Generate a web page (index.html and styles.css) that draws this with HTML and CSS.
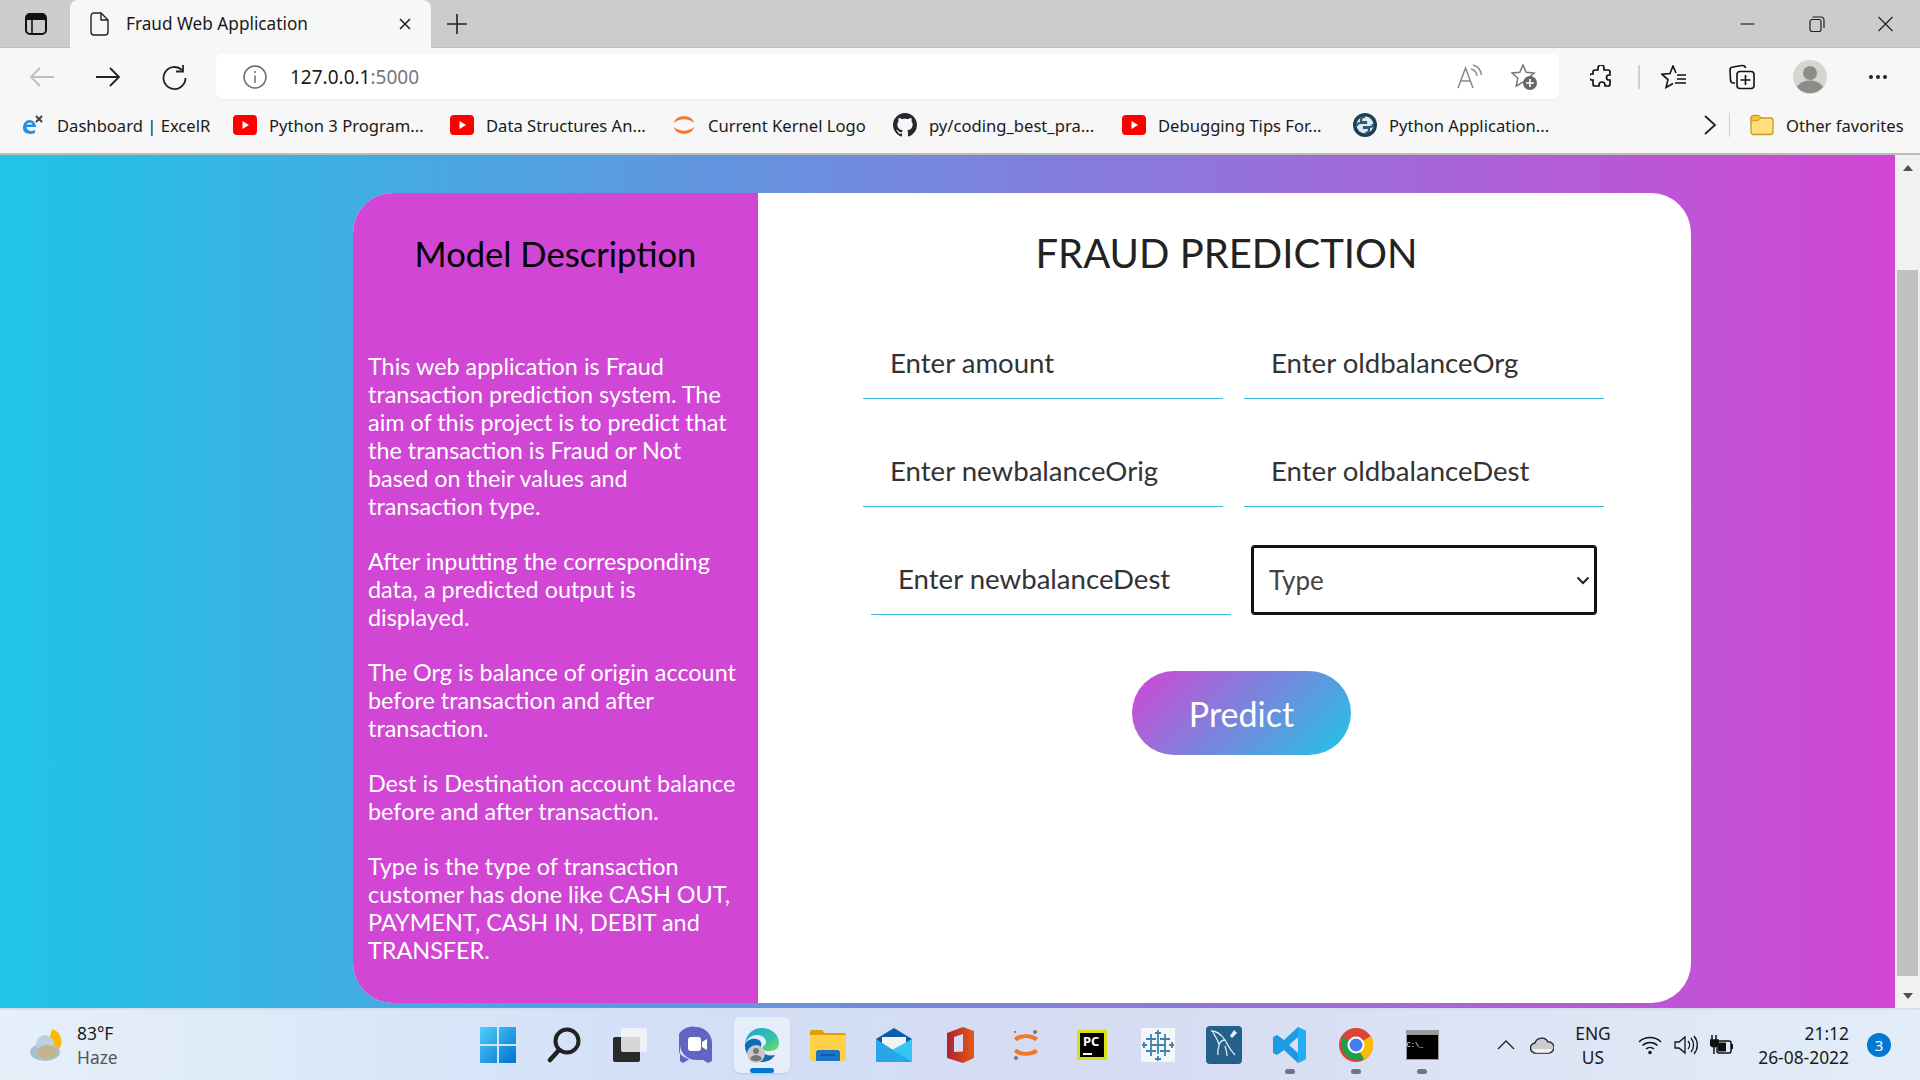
FILE: index.html
```html
<!DOCTYPE html>
<html lang="en">
    <head>
        <meta charset="UTF-8" />
        <title>Fraud Web Application</title>
        <link rel="stylesheet" href="styles.css">
    </head>
    <body>
        <!-- tab strip -->
        <header class="tabstrip">
            <span class="tabs-btn">
                <svg width="22" height="22" viewBox="0 0 22 22"><rect x="1" y="1" width="20" height="20" rx="4" fill="none" stroke="#111" stroke-width="2"/><path d="M1 6V5a4 4 0 0 1 4-4h12a4 4 0 0 1 4 4v2H1z" fill="#111"/><path d="M7 7v14" stroke="#111" stroke-width="1.6"/></svg>
            </span>
            <div class="tab">
                <svg width="20" height="24" viewBox="0 0 20 24"><path d="M4 1h7l7 7v12a3 3 0 0 1-3 3H4a3 3 0 0 1-3-3V4a3 3 0 0 1 3-3zM11 1v7h7" fill="none" stroke="#222" stroke-width="1.4"/></svg>
                <span class="tab-title">Fraud Web Application</span>
                <svg class="tab-close" width="14" height="14" viewBox="0 0 14 14"><path d="M2 2l10 10M12 2L2 12" stroke="#222" stroke-width="1.6"/></svg>
            </div>
            <svg class="new-tab" width="22" height="22" viewBox="0 0 22 22"><path d="M11 1v20M1 11h20" stroke="#222" stroke-width="1.6"/></svg>
            <div class="win-controls">
                <svg width="69" height="16" viewBox="0 0 16 16"><path d="M1 8h14" stroke="#222" stroke-width="1.200"/></svg>
                <svg width="69" height="16" viewBox="0 0 16 16"><path d="M1.500 5.500a2 2 0 0 1 2-2h7a2 2 0 0 1 2 2v8a2 2 0 0 1-2 2h-7a2 2 0 0 1-2-2zM4 1h8.500a3 3 0 0 1 3 3v8" fill="none" stroke="#222" stroke-width="1.200"/></svg>
                <svg width="69" height="16" viewBox="0 0 16 16"><path d="M1 1l14 14M15 1L1 15" stroke="#222" stroke-width="1.200"/></svg>
            </div>
        </header>

        <!-- toolbar -->
        <nav class="toolbar">
            <span class="tool"><svg width="26" height="22" viewBox="0 0 26 22"><path d="M25 11H2M11 2l-9 9 9 9" fill="none" stroke="#bdbdbd" stroke-width="1.8"/></svg></span>
            <span class="tool"><svg width="26" height="22" viewBox="0 0 26 22"><path d="M1 11h23M15 2l9 9-9 9" fill="none" stroke="#222" stroke-width="1.8"/></svg></span>
            <span class="tool"><svg width="26" height="26" viewBox="0 0 26 26"><path d="M21 6a11 11 0 1 0 3.500 8" fill="none" stroke="#222" stroke-width="1.8"/><path d="M22 1v6.500h-7" fill="none" stroke="#222" stroke-width="1.8"/></svg></span>
            <div class="addressbar">
                <svg class="info" width="24" height="24" viewBox="0 0 24 24"><circle cx="12" cy="12" r="11" fill="none" stroke="#666" stroke-width="1.400"/><path d="M12 10.500V18" stroke="#666" stroke-width="1.400"/><circle cx="12" cy="7" r="1" fill="#666"/></svg>
                <span class="url">127.0.0.1<span class="port">:5000</span></span>
                <svg class="read-aloud" width="26" height="26" viewBox="0 0 26 26"><path d="M1 24L8.500 4 16 24M4 17h9" fill="none" stroke="#888" stroke-width="1.500"/><path d="M14 5a8 8 0 0 1 6 7M16 1a12 12 0 0 1 8.500 10" fill="none" stroke="#888" stroke-width="1.500"/></svg>
                <svg class="fav-add" width="28" height="26" viewBox="0 0 28 26"><path d="M12 1l3.200 7.200 7.800.8-5.800 5.200 1.600 7.700L12 18l-6.800 3.900 1.600-7.700L1 9l7.800-.8z" fill="none" stroke="#777" stroke-width="1.500"/><circle cx="19" cy="19" r="7" fill="#666"/><path d="M19 15v8M15 19h8" stroke="#fff" stroke-width="1.600"/></svg>
            </div>
            <div class="tool-right">
                <span class="tool-sm"><svg width="22" height="24" viewBox="0 0 22 24"><path d="M8 3a3 3 0 0 1 6 0v2h4a2 2 0 0 1 2 2v3h-1a2.500 2.500 0 0 0 0 5h1v4a2 2 0 0 1-2 2h-3v-1a3 3 0 0 0-6 0v1H5a2 2 0 0 1-2-2v-4H2a3 3 0 0 1 0-6h1V7a2 2 0 0 1 2-2h3z" fill="none" stroke="#111" stroke-width="1.700"/></svg></span>
                <span class="tool-sep"></span>
                <span class="tool-sm"><svg width="26" height="24" viewBox="0 0 26 24"><path d="M15 8l-3-7-3 7.500L1 9.300l6 5.300L5 22.500l7-4" fill="none" stroke="#111" stroke-width="1.600"/><path d="M16 10h9M16 14h9M14 18h11" stroke="#111" stroke-width="1.600"/></svg></span>
                <span class="tool-sm"><svg width="26" height="26" viewBox="0 0 26 26"><path d="M6 19l-1.500 0A3 3 0 0 1 1.500 16L1 6a3 3 0 0 1 3-3l9-1.500a3 3 0 0 1 3.500 2.500" fill="none" stroke="#111" stroke-width="1.600"/><rect x="8" y="7.500" width="17" height="17" rx="3" fill="none" stroke="#111" stroke-width="1.600"/><path d="M16.500 11v10M11.500 16h10" stroke="#111" stroke-width="1.600"/></svg></span>
                <span class="tool-sm"><svg width="34" height="34" viewBox="0 0 34 34"><circle cx="17" cy="17" r="17" fill="#d6d5d1"/><circle cx="17" cy="13" r="7" fill="#8e8c88"/><path d="M4 27c3-5 8-6.500 13-6.500S27 22 30 27a17 17 0 0 1-26 0z" fill="#8e8c88"/></svg></span>
                <span class="tool-sm"><svg width="20" height="6" viewBox="0 0 20 6"><circle cx="3" cy="3" r="2" fill="#222"/><circle cx="10" cy="3" r="2" fill="#222"/><circle cx="17" cy="3" r="2" fill="#222"/></svg></span>
            </div>
        </nav>

        <!-- bookmarks -->
        <nav class="bookmarks">
            <a class="bm"><svg width="24" height="22" viewBox="0 0 24 22"><path d="M2 14c0-5 3-8 6.500-8S15 9 15 13H5.500c.5 4 5 5 8.500 3v3c-5 2-12 1-12-5zM5.500 10.500h6C11 8 6.500 8 5.500 10.500z" fill="#2a8fdc"/><path d="M15 2l6 6M21 2l-6 6" stroke="#444" stroke-width="2"/></svg><span>Dashboard | ExcelR</span></a>
            <a class="bm"><svg class="yt" width="24" height="20" viewBox="0 0 24 20"><rect width="24" height="20" rx="4" fill="#f00"/><path d="M9.500 6l6.500 4-6.500 4z" fill="#fff"/></svg><span>Python 3 Program...</span></a>
            <a class="bm"><svg class="yt" width="24" height="20" viewBox="0 0 24 20"><rect width="24" height="20" rx="4" fill="#f00"/><path d="M9.500 6l6.500 4-6.500 4z" fill="#fff"/></svg><span>Data Structures An...</span></a>
            <a class="bm"><svg width="24" height="24" viewBox="0 0 24 24"><path d="M2 10C3 1 21 1 22 10 17 5 7 5 2 10zM2 14C3 23 21 23 22 14 17 19 7 19 2 14z" fill="#f37726"/></svg><span>Current Kernel Logo</span></a>
            <a class="bm"><svg width="24" height="24" viewBox="0 0 16 16"><path fill="#24292f" d="M8 0C3.580 0 0 3.580 0 8c0 3.540 2.290 6.530 5.470 7.590.4.070.55-.17.55-.38 0-.19-.01-.82-.01-1.490-2.010.37-2.530-.49-2.690-.94-.09-.23-.48-.94-.82-1.130-.28-.15-.68-.52-.01-.53.63-.01 1.080.58 1.230.82.720 1.210 1.870.870 2.330.660.070-.520.280-.870.510-1.070-1.780-.2-3.640-.890-3.640-3.950 0-.870.310-1.590.820-2.150-.080-.2-.360-1.020.080-2.120 0 0 .670-.210 2.200.820.640-.180 1.320-.270 2-.270s1.360.090 2 .270c1.530-1.040 2.200-.820 2.200-.820.440 1.100.160 1.920.080 2.120.510.560.820 1.270.820 2.150 0 3.070-1.870 3.750-3.650 3.950.290.250.540.730.540 1.480 0 1.070-.010 1.930-.010 2.200 0 .210.150.460.550.380A8.010 8.010 0 0 0 16 8c0-4.420-3.580-8-8-8z"/></svg><span>py/coding_best_pra...</span></a>
            <a class="bm"><svg class="yt" width="24" height="20" viewBox="0 0 24 20"><rect width="24" height="20" rx="4" fill="#f00"/><path d="M9.500 6l6.500 4-6.500 4z" fill="#fff"/></svg><span>Debugging Tips For...</span></a>
            <a class="bm"><svg width="24" height="24" viewBox="0 0 24 24"><circle cx="12" cy="12" r="12" fill="#1f3f56"/><circle cx="12" cy="12" r="8.500" fill="#dfe8ee"/><path d="M12 4c-3 0-4 1.500-4 3v2h5v1H7c-2 0-3 1-3 3M12 20c3 0 4-1.500 4-3v-2h-5v-1h6c2 0 3-1 3-3" fill="none" stroke="#2b5a7a" stroke-width="2.200"/></svg><span>Python Application...</span></a>
            <svg class="bm-more" width="14" height="20" viewBox="0 0 14 20"><path d="M2 1l10 9-10 9" fill="none" stroke="#222" stroke-width="1.800"/></svg>
            <span class="bm-sep"></span>
            <a class="bm-other"><svg width="24" height="22" viewBox="0 0 24 22"><path d="M1 4a2.500 2.500 0 0 1 2.500-2.500h5L11 4h9.500A2.500 2.500 0 0 1 23 6.500V18a2.500 2.500 0 0 1-2.500 2.500h-17A2.500 2.500 0 0 1 1 18z" fill="#ffdf7e" stroke="#c99a1e" stroke-width="1.300"/><path d="M1 7V4a2.500 2.500 0 0 1 2.500-2.500h5L11 4 8 6.500z" fill="#f5c132" stroke="#c99a1e" stroke-width="1"/></svg><span>Other favorites</span></a>
        </nav>

        <!-- the page itself -->
        <div class="viewport">
            <main class="page">
                <section class="card">
                    <aside class="desc">
                        <h2>Model Description</h2>
                        <p>This web application is Fraud transaction prediction system. The aim of this project is to predict that the transaction is Fraud or Not based on their values and transaction type.</p>
                        <p>After inputting the corresponding data, a predicted output is displayed.</p>
                        <p>The Org is balance of origin account before transaction and after transaction.</p>
                        <p>Dest is Destination account balance before and after transaction.</p>
                        <p>Type is the type of transaction customer has done like CASH OUT, PAYMENT, CASH IN, DEBIT and TRANSFER.</p>
                    </aside>
                    <form class="predict">
                        <h1>FRAUD PREDICTION</h1>
                        <div class="row">
                            <input type="text" placeholder="Enter amount" />
                            <input type="text" placeholder="Enter oldbalanceOrg" />
                        </div>
                        <div class="row">
                            <input type="text" placeholder="Enter newbalanceOrig" />
                            <input type="text" placeholder="Enter oldbalanceDest" />
                        </div>
                        <div class="row row-last">
                            <input type="text" placeholder="Enter newbalanceDest" />
                            <div class="select-wrap">
                                <select>
                                    <option>Type</option>
                                    <option>CASH OUT</option>
                                    <option>PAYMENT</option>
                                    <option>CASH IN</option>
                                    <option>DEBIT</option>
                                    <option>TRANSFER</option>
                                </select>
                                <svg class="select-arrow" width="14" height="9" viewBox="0 0 14 9"><path d="M1.500 1.500L7 7l5.500-5.500" fill="none" stroke="#222" stroke-width="2"/></svg>
                            </div>
                        </div>
                        <button type="button" class="predict-btn">Predict</button>
                    </form>
                </section>
            </main>
            <div class="scrollbar">
                <span class="arrow arrow-up"></span>
                <div class="thumb"></div>
                <span class="arrow arrow-down"></span>
            </div>
        </div>

        <!-- windows taskbar -->
        <footer class="taskbar">
            <div class="weather">
                <svg width="36" height="34" viewBox="0 0 36 34"><path d="M22 1a13 13 0 0 1 4 23l-8-8z" fill="#ffb900"/><ellipse cx="15" cy="24" rx="15" ry="9" fill="#a9c0d3"/><circle cx="15" cy="16" r="9" fill="#bcd0df"/><ellipse cx="17" cy="24" rx="10" ry="7" fill="#c2b58c"/></svg>
                <div class="weather-text"><span>83°F</span><span class="haze">Haze</span></div>
            </div>
            <div class="apps">
                <span class="app"><svg width="36" height="36" viewBox="0 0 36 36"><defs><linearGradient id="win" x1="0" y1="0" x2="1" y2="1"><stop offset="0" stop-color="#50d0fb"/><stop offset="1" stop-color="#0071ce"/></linearGradient></defs><path fill="url(#win)" d="M1 0h16v17H0V1a1 1 0 0 1 1-1zM19 0h16a1 1 0 0 1 1 1v16H19zM0 19h17v17H1a1 1 0 0 1-1-1zM19 19h17v16a1 1 0 0 1-1 1H19z"/></svg></span>
                <span class="app"><svg width="34" height="36" viewBox="0 0 34 36"><circle cx="20" cy="14" r="11.500" fill="none" stroke="#222" stroke-width="4"/><path d="M12 23L3 33" stroke="#222" stroke-width="4.500" stroke-linecap="round"/></svg></span>
                <span class="app"><svg width="36" height="36" viewBox="0 0 36 36"><rect x="1" y="10" width="27" height="25" rx="2" fill="#2a2a2a"/><rect x="9" y="1" width="26" height="24" rx="2" fill="#f4f4f4" fill-opacity=".85"/></svg></span>
                <span class="app"><svg width="34" height="38" viewBox="0 0 34 38"><path d="M17 1a16 16 0 0 1 16 16v18l-4 2-5-3H17A16 16 0 0 1 1 18v17l3 2 5-3 1-1A16 16 0 0 1 17 1z" fill="#6264c4"/><rect x="9" y="11" width="13" height="14" rx="3" fill="#fff"/><path d="M23 16l5-3v11l-5-3z" fill="#fff"/></svg></span>
                <span class="app app-active"><svg width="36" height="36" viewBox="0 0 36 36"><defs><linearGradient id="edge" x1="0" y1="0" x2="1" y2="1"><stop offset="0" stop-color="#1ea7d8"/><stop offset=".6" stop-color="#35c1a9"/><stop offset="1" stop-color="#7edc5d"/></linearGradient></defs><path d="M1 17C2 7 9 1 18 1c10 0 17 7 17 15 0 6-5 8-10 8-3 0-7-1-6-4 1-2 3-2 3-5 0-4-4-7-9-7C7 8 3 12 1 17z" fill="url(#edge)"/><path d="M1 17c2-4 7-6 11-5 5 1 6 4 5 8-1 5 5 10 14 8-3 5-8 7-13 7C8 35 0 27 1 17z" fill="#0f6cb5"/><circle cx="12" cy="27" r="9" fill="#c9c9c9"/><circle cx="12" cy="24" r="3" fill="#777"/><path d="M6 32c1-3 4-4 6-4s5 1 6 4a9 9 0 0 1-12 0z" fill="#777"/></svg><i class="indicator"></i></span>
                <span class="app"><svg width="36" height="32" viewBox="0 0 36 32"><path d="M0 3a2 2 0 0 1 2-2h10l3 3h19a2 2 0 0 1 2 2v3H0z" fill="#dda000"/><path d="M0 6h36v24a2 2 0 0 1-2 2H2a2 2 0 0 1-2-2z" fill="#ffcf48"/><path d="M6 32v-8a3 3 0 0 1 3-3h18a3 3 0 0 1 3 3v8z" fill="#1a74c9"/><path d="M11 26h14" stroke="#0d4f94" stroke-width="1.500"/></svg></span>
                <span class="app"><svg width="36" height="34" viewBox="0 0 36 34"><path d="M0 11L18 0l18 11v21a2 2 0 0 1-2 2H2a2 2 0 0 1-2-2z" fill="#0a5ba8"/><path d="M6 9h24v12L18 25 6 21z" fill="#f2f2f2"/><path d="M0 11l36 23H2a2 2 0 0 1-2-2z" fill="#27a7e8"/><path d="M36 11v23L16 22z" fill="#36c4f4"/></svg></span>
                <span class="app"><svg width="28" height="36" viewBox="0 0 28 36"><defs><linearGradient id="off" x1="0" y1="0" x2="1" y2="0"><stop offset="0" stop-color="#b02033"/><stop offset="1" stop-color="#e35a10"/></linearGradient></defs><path d="M17 0l11 4v27l-11 5-16-5V6zM17 7L8 10v15l9-.5z" fill="url(#off)" fill-rule="evenodd"/></svg></span>
                <span class="app"><svg width="28" height="32" viewBox="0 0 28 32"><path d="M2 9c5-5 19-5 24 0-2 2.500-3 3-3 3C18 8 10 8 5 12 4 12 3 11 2 9zM2 23c5 5 19 5 24 0-2-2.500-3-3-3-3-5 4-13 4-18 0-1 0-2 1-3 3z" fill="#f37726"/><circle cx="23" cy="3" r="2" fill="#777"/><circle cx="3" cy="3" r="1" fill="#666"/><circle cx="4" cy="29" r="2" fill="#777"/></svg></span>
                <span class="app"><span class="pycharm">PC<i></i></span></span>
                <span class="app"><svg width="34" height="34" viewBox="0 0 34 34"><rect width="34" height="34" rx="1" fill="#f4f6f8"/><path d="M17 8v18M9 17h16M10 6v10M5 11h10M24 6v10M19 11h10M10 18v10M5 23h10M24 18v10M19 23h10M17 2v6M14 5h6M17 28v5M14 31h6M3 14v6M1 17h5M31 14v6M28 17h5" stroke="#3f83ad" stroke-width="1.800"/></svg></span>
                <span class="app"><svg width="36" height="38" viewBox="0 0 36 38"><rect width="36" height="38" rx="4" fill="#24618a"/><path d="M5 5c6 0 10 3 14 9 3 5 4 9 10 15M7 6c2 5 5 7 6 13 0 3-2 4-1 10M19 14c-3 0-5 2-6 5M19 20c1 4 2 6 2 10" fill="none" stroke="#dce9f0" stroke-width="1.300"/><path d="M28 4l3 3-5 5-2-2z" fill="#eef"/></svg></span>
                <span class="app dot"><svg width="34" height="36" viewBox="0 0 34 36"><path d="M25 0l8 4v28l-8 4-14-13-7 5-4-2V10l4-2 7 5zM25 10l-9 8 9 8z" fill="#1e9ae0" fill-rule="evenodd"/><path d="M25 0l8 4v28l-8 4z" fill="#22adf6"/></svg><i></i></span>
                <span class="app dot"><svg width="34" height="36" viewBox="0 0 34 34"><circle cx="17" cy="17" r="17" fill="#db4437"/><path d="M17 17L32 8a17 17 0 0 1-8 24z" fill="#fbbc05"/><path d="M17 17l8 14a17 17 0 0 1-23-14L2 8z" fill="#1e9e48"/><circle cx="17" cy="17" r="8.500" fill="#fff"/><circle cx="17" cy="17" r="6.500" fill="#3f7ff0"/></svg><i></i></span>
                <span class="app dot"><span class="cmd"><b>C:\_</b></span><i></i></span>
            </div>
            <div class="tray">
                <span class="tray-icon"><svg width="18" height="10" viewBox="0 0 18 10"><path d="M1 9l8-8 8 8" fill="none" stroke="#222" stroke-width="1.300"/></svg></span>
                <span class="tray-icon"><svg width="24" height="18" viewBox="0 0 24 18"><path d="M6 17a5 5 0 0 1-1-10 7 7 0 0 1 13-1 5.500 5.500 0 0 1 1 11z" fill="#ccc" stroke="#222" stroke-width="1.300"/><path d="M2 13h20v1l-3 3H6z" fill="#fff" opacity=".7"/></svg></span>
                <div class="lang"><span>ENG</span><span>US</span></div>
                <span class="tray-icon tray-first"><svg width="24" height="20" viewBox="0 0 24 20"><path d="M1 7a16 16 0 0 1 22 0M4.500 10.500a11 11 0 0 1 15 0M8 14a6 6 0 0 1 8 0" fill="none" stroke="#111" stroke-width="1.500"/><circle cx="12" cy="17.500" r="1.800" fill="#111"/></svg></span>
                <span class="tray-icon"><svg width="24" height="22" viewBox="0 0 24 22"><path d="M1 8v6h4l6 5V3L5 8z" fill="none" stroke="#111" stroke-width="1.300"/><path d="M14 7a6 6 0 0 1 0 8M17 4a11 11 0 0 1 0 14M20 2a14 14 0 0 1 0 18" fill="none" stroke="#111" stroke-width="1.300"/></svg></span>
                <span class="tray-icon"><svg width="24" height="22" viewBox="0 0 24 22"><path d="M2 1v5M6 1v5M0 6h8v3a4 4 0 0 1-8 0zM4 13v7" stroke="#111" stroke-width="1.500" fill="#111"/><rect x="7" y="7" width="14" height="12" rx="2" fill="none" stroke="#111" stroke-width="1.500"/><rect x="8" y="8.500" width="8" height="9" fill="#111"/><path d="M22 10v5" stroke="#111" stroke-width="2"/></svg></span>
                <div class="clock"><span>21:12</span><span>26-08-2022</span></div>
                <span class="notif">3</span>
            </div>
        </footer>
    </body>
</html>
```

FILE: styles.css
```css
* {
    padding: 0;
    margin: 0;
    box-sizing: border-box;
}
html,
body {
    height: 100%;
}
body {
    display: flex;
    flex-direction: column;
    height: 100vh;
    overflow: hidden;
    font-family: "Noto Sans", "Liberation Sans", sans-serif;
    color: #1a1a1a;
}

/* tab strip */
.tabstrip {
    height: 48px;
    display: flex;
    align-items: center;
    background-color: #cccccc;
    border-bottom: 1px solid #bdbdbd;
}
.tabs-btn {
    width: 70px;
    padding-left: 2px;
    display: flex;
    justify-content: center;
}
.tab {
    width: 361px;
    height: 48px;
    padding: 0 19px 0 20px;
    display: flex;
    align-items: center;
    background-color: #f7f7f7;
    border-radius: 8px 8px 0 0;
}
.tab-title {
    margin-left: 16px;
    font-size: 17.2px;
    flex: 1;
}
.new-tab {
    margin-left: 15px;
}
.win-controls {
    margin-left: auto;
    display: flex;
}

/* toolbar */
.toolbar {
    height: 53px;
    padding: 6px 0 2px 9px;
    display: flex;
    align-items: center;
    background-color: #f7f7f7;
}
.tool {
    width: 66px;
    display: flex;
    justify-content: center;
}
.addressbar {
    flex: 1;
    height: 45px;
    margin-left: 9px;
    padding: 0 20px 0 27px;
    display: flex;
    align-items: center;
    background-color: #fff;
    border-radius: 6px;
    box-shadow: 0 1px 2px rgba(0, 0, 0, 0.05);
}
.url {
    margin-left: 23px;
    font-size: 19px;
    flex: 1;
}
.port {
    color: #777;
}
.fav-add {
    margin-left: 28px;
}
.tool-right {
    width: 361px;
    padding-left: 8px;
    display: flex;
    align-items: center;
}
.tool-sm {
    width: 68px;
    display: flex;
    justify-content: center;
}
.tool-sep {
    width: 2px;
    height: 24px;
    margin-left: 3px;
    background-color: #d0d0d0;
}

/* bookmarks */
.bookmarks {
    height: 54px;
    padding: 0 0 4px 21px;
    display: grid;
    grid-template-columns: 212px 217px 222px 221px 229px 231px 337px 39px 21px auto;
    align-items: center;
    background-color: #f7f7f7;
    border-bottom: 2px solid #bcbcbc;
}
.bm,
.bm-other {
    display: flex;
    align-items: center;
    font-size: 16.6px;
    white-space: nowrap;
}
.bm span,
.bm-other span {
    margin-left: 12px;
}
.bm-more {
    justify-self: center;
}
.bm-sep {
    width: 1px;
    height: 24px;
    background-color: #d0d0d0;
}

/* page */
.viewport {
    flex: 1;
    display: flex;
    min-height: 0;
}
.page {
    flex: 1;
    padding: 38px 0 0 353px;
    background: linear-gradient(90deg, #1fc5e6, #d246d4);
}
.card {
    width: 1338px;
    height: 810px;
    display: flex;
    overflow: hidden;
    background-color: #fff;
    border-radius: 40px;
    font-family: Lato, "Open Sans", sans-serif;
}
.desc {
    width: 405px;
    padding: 39px 15px 0;
    background-color: #d146d4;
    color: #fff;
}
.desc h2 {
    margin-bottom: 76px;
    font-size: 34.6px;
    line-height: 44px;
    font-weight: 400;
    color: #000;
    text-align: center;
}
.desc p {
    margin-bottom: 27px;
    font-size: 23.4px;
    line-height: 28px;
}
.predict {
    flex: 1;
    padding: 32px 87px 0 105px;
}
.predict h1 {
    margin-bottom: 10px;
    padding-right: 14px;
    font-size: 40px;
    line-height: 56px;
    font-weight: 400;
    color: #222;
    text-align: center;
}
.row {
    display: flex;
    gap: 21px;
    height: 108px;
    align-items: flex-end;
}
.row input {
    width: 360px;
    height: 72px;
    padding-left: 27px;
    border: none;
    border-bottom: 1px solid #3db5d8;
    outline: none;
    font-family: inherit;
    font-size: 27.6px;
    color: #333;
}
.row input::placeholder {
    color: #333;
    opacity: 1;
}
.row-last {
    margin-left: 8px;
    gap: 20px;
}
.select-wrap {
    position: relative;
    width: 346px;
    height: 70px;
}
.select-wrap select {
    width: 100%;
    height: 100%;
    padding-left: 15px;
    border: 3px solid #111;
    border-radius: 4px;
    background-color: #fff;
    appearance: none;
    font-family: inherit;
    font-size: 26px;
    color: #444;
}
.select-arrow {
    position: absolute;
    right: 7px;
    top: 31px;
    pointer-events: none;
}
.predict-btn {
    display: block;
    width: 219px;
    height: 84px;
    margin: 56px 0 0 269px;
    border: none;
    border-radius: 42px;
    background: linear-gradient(135deg, #d246d4, #1fc5e6);
    font-family: inherit;
    font-size: 34px;
    color: #fff;
}

/* scrollbar */
.scrollbar {
    width: 25px;
    display: flex;
    flex-direction: column;
    align-items: center;
    background-color: #f1f1f1;
}
.arrow {
    flex: none;
    width: 0;
    height: 0;
    border-left: 5.5px solid transparent;
    border-right: 5.5px solid transparent;
}
.arrow-up {
    margin-top: 10px;
    border-bottom: 6px solid #505050;
}
.arrow-down {
    margin-top: 17px;
    border-top: 6px solid #505050;
}
.thumb {
    flex: none;
    width: 21px;
    height: 706px;
    margin-top: 99px;
    background-color: #c1c1c1;
}

/* taskbar */
.taskbar {
    height: 72px;
    display: flex;
    align-items: center;
    background: linear-gradient(90deg, #e6f0f9, #d2dff7 35%, #d6dcf2 60%, #e3edf8);
    border-top: 2px solid #d5dfec;
}
.weather {
    width: 465px;
    padding-left: 30px;
    display: flex;
    align-items: center;
    gap: 11px;
}
.weather-text,
.lang,
.clock {
    display: flex;
    flex-direction: column;
    font-size: 17.4px;
    line-height: 24px;
}
.haze {
    color: #555;
}
.apps {
    display: flex;
}
.app {
    position: relative;
    width: 66px;
    height: 70px;
    display: flex;
    align-items: center;
    justify-content: center;
}
.app-active::before {
    content: "";
    position: absolute;
    left: 5px;
    right: 5px;
    top: 7px;
    bottom: 7px;
    background-color: rgba(255, 255, 255, 0.45);
    border-radius: 6px;
    box-shadow: 0 1px 2px rgba(0, 0, 0, 0.12);
}
.app svg {
    position: relative;
}
.indicator {
    position: absolute;
    left: 21px;
    bottom: 7px;
    width: 24px;
    height: 5px;
    background-color: #0078d4;
    border-radius: 3px;
}
.dot i {
    position: absolute;
    left: 28px;
    bottom: 6px;
    width: 10px;
    height: 5px;
    background-color: #6f7680;
    border-radius: 3px;
}
.pycharm {
    position: relative;
    width: 30px;
    height: 30px;
    padding: 1px 3px;
    background-color: #000;
    border: 3px solid #d4e116;
    font-size: 13px;
    line-height: 15px;
    font-weight: 700;
    color: #fff;
}
.pycharm i {
    position: absolute;
    left: 3px;
    bottom: 2px;
    width: 9px;
    height: 2px;
    background-color: #fff;
}
.cmd {
    width: 33px;
    height: 30px;
    padding-top: 6px;
    background-color: #000;
    border: 1px solid #9a9a9a;
    border-top: 5px solid #9a9a9a;
    font-size: 7px;
    line-height: 8px;
    color: #fff;
}
.cmd b {
    font-weight: 400;
    font-family: "Liberation Mono", monospace;
}
.tray {
    margin-left: auto;
    padding-right: 29px;
    display: flex;
    align-items: center;
}
.tray-icon {
    width: 36px;
    display: flex;
    justify-content: center;
}
.tray-first {
    margin-left: 6px;
}
.lang {
    width: 66px;
    align-items: center;
}
.clock {
    width: 109px;
    align-items: flex-end;
}
.notif {
    width: 24px;
    height: 24px;
    margin-left: 18px;
    display: flex;
    align-items: center;
    justify-content: center;
    background-color: #0078d4;
    border-radius: 50%;
    font-size: 15px;
    color: #fff;
}
```
